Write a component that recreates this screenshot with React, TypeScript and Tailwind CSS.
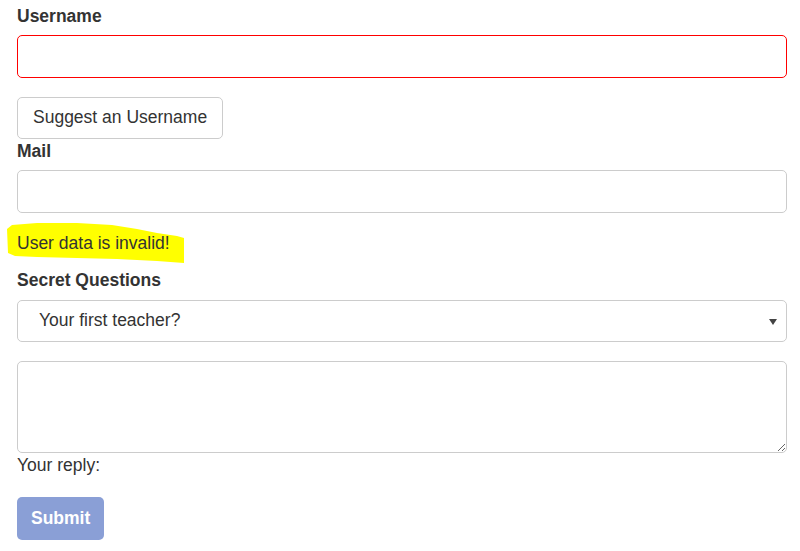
import React from "react";

export default function App() {
  return (
    <div className="w-[800px] h-[551px] bg-white overflow-hidden text-[#333] text-[17.5px] leading-[25px]" style={{ fontFamily: '"Liberation Sans", Arial, sans-serif' }}>
      <div className="ml-[17px] w-[770px] pt-[4px]">
        <div className="mb-[18.75px]">
          <label className="block font-bold mb-[6.25px] h-[25px]">Username</label>
          <input className="block w-full h-[42.5px] rounded-[5px] border border-[#ff0000] bg-white px-[15px] outline-none" />
        </div>
        <button className="block h-[42.5px] px-[15px] rounded-[5px] border border-[#ccc] bg-white text-[#333] leading-[25px]">
          Suggest an Username
        </button>
        <div className="mb-[18px]">
          <label className="block font-bold mb-[6.25px] h-[25px]">Mail</label>
          <input className="block w-full h-[42.5px] rounded-[5px] border border-[#ccc] bg-white px-[15px] outline-none" />
        </div>
        <div className="relative h-[25px] mb-[12.5px]">
          <svg className="absolute left-[-10px] top-[-8px]" width="180" height="42" viewBox="0 0 180 42">
            <polygon
              fill="#ffff00"
              points="0,6 5,2 30,0 70,0 105,2 130,6 150,10 170,13 177,15 177,40 150,38 110,36 70,35 30,34 8,33 1,30"
            />
          </svg>
          <span className="relative">User data is invalid!</span>
        </div>
        <div className="mb-[18.75px]">
          <label className="block font-bold mb-[6.25px] h-[25px]">Secret Questions</label>
          <div className="relative h-[42.5px] rounded-[5px] border border-[#ccc] bg-white flex items-center pl-[21px]">
            <span className="text-[#333]">Your first teacher?</span>
            <svg className="absolute right-[9px] top-[18px]" width="8" height="6" viewBox="0 0 8 6">
              <polygon points="0,0 8,0 4,6" fill="#444" />
            </svg>
          </div>
        </div>
        <textarea className="block w-full h-[92.5px] rounded-[5px] border border-[#ccc] bg-white outline-none" />
        <div className="h-[25px] mb-[18.75px]">Your reply:</div>
        <button className="block h-[42.5px] px-[14px] rounded-[5px] bg-[#8a9fd6] text-white font-bold leading-[25px]">
          Submit
        </button>
      </div>
    </div>
  );
}
